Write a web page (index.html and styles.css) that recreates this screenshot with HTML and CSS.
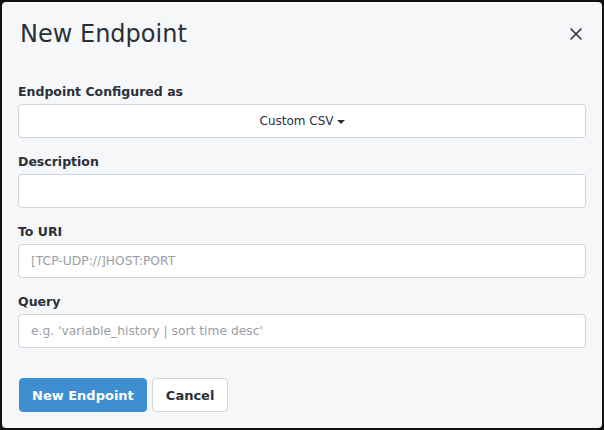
FILE: index.html
```html
<!DOCTYPE html>
<html>
<head>
<meta charset="utf-8">
<link rel="stylesheet" href="styles.css">
</head>
<body>
<div class="modal">
  <div class="modal-header">
    <h1 class="title">New Endpoint</h1>
    <button class="close" aria-label="Close">
      <svg width="12" height="12" viewBox="0 0 12 12"><path d="M1 1L11 11M11 1L1 11" stroke="#2b2f3a" stroke-width="1.6" stroke-linecap="round"/></svg>
    </button>
  </div>
  <div class="modal-body">
    <div class="group">
      <label class="label">Endpoint Configured as</label>
      <button class="select">Custom CSV <span class="caret"></span></button>
    </div>
    <div class="group">
      <label class="label">Description</label>
      <div class="input"></div>
    </div>
    <div class="group">
      <label class="label">To URI</label>
      <div class="input placeholder">[TCP-UDP://]HOST:PORT</div>
    </div>
    <div class="group">
      <label class="label">Query</label>
      <div class="input placeholder">e.g. 'variable_history | sort time desc'</div>
    </div>
    <div class="actions">
      <button class="btn primary">New Endpoint</button>
      <button class="btn default">Cancel</button>
    </div>
  </div>
</div>
</body>
</html>
```
FILE: styles.css
```css
html, body {
  margin: 0;
  padding: 0;
  background: #111;
  width: 604px;
  height: 430px;
  overflow: hidden;
}
body {
  font-family: "DejaVu Sans", sans-serif;
  color: #2b2f3a;
  padding: 2px;
  box-sizing: border-box;
}
.modal {
  background: #f5f7f9;
  border-radius: 4px;
  height: 426px;
  box-sizing: border-box;
  display: flex;
  flex-direction: column;
}
.modal-header {
  display: flex;
  align-items: center;
  justify-content: space-between;
  padding: 14px 20px 0 18px;
  height: 36px;
}
.title {
  margin: 0;
  font-size: 24px;
  font-weight: 400;
  color: #2b2f3a;
  letter-spacing: 0;
}
.close {
  background: none;
  border: 0;
  padding: 0;
  width: 12px;
  height: 12px;
  display: flex;
}
.modal-body {
  padding: 32px 16px 0 16px;
  display: flex;
  flex-direction: column;
}
.group {
  display: flex;
  flex-direction: column;
  margin-bottom: 16px;
}
.label {
  font-size: 12.5px;
  font-weight: 700;
  color: #2b2f3a;
  line-height: 16px;
  margin-bottom: 4px;
}
.select, .input {
  height: 34px;
  box-sizing: border-box;
  background: #fff;
  border: 1px solid #cdd6df;
  border-radius: 4px;
  font-family: inherit;
  font-size: 12px;
  color: #2b2f3a;
}
.select {
  display: flex;
  align-items: center;
  justify-content: center;
  gap: 3px;
  padding: 0;
}
.caret {
  width: 0;
  height: 0;
  border-left: 4px solid transparent;
  border-right: 4px solid transparent;
  border-top: 4px solid #2b2f3a;
  margin-top: 2px;
}
.input {
  display: flex;
  align-items: center;
  padding: 0 12px;
  font-size: 12.3px;
}
.placeholder {
  color: #9a9ea6;
}
.actions {
  display: flex;
  gap: 5px;
  margin-top: 14px;
}
.btn {
  height: 34px;
  box-sizing: border-box;
  border-radius: 4px;
  font-family: inherit;
  font-size: 13px;
  font-weight: 700;
  padding: 0 12px;
}
.primary {
  background: #3f8fd0;
  border: 1px solid #3f8fd0;
  color: #fff;
  margin-left: 1px;
}
.default {
  background: #fff;
  border: 1px solid #cdd6df;
  color: #2b2f3a;
  padding: 0 13px;
}
```
